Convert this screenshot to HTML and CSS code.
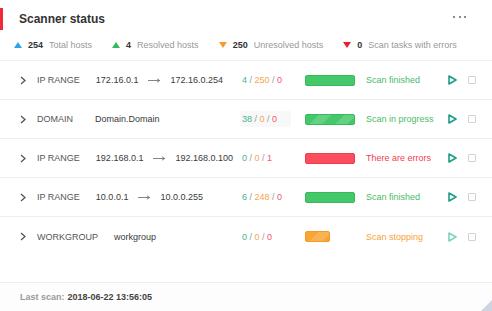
FILE: index.html
```html
<!DOCTYPE html>
<html>
<head>
<meta charset="utf-8">
<link rel="stylesheet" href="styles.css">
</head>
<body>
<div class="card">
  <div class="header">
    <span class="accent"></span>
    <h1 class="title">Scanner status</h1>
    <span class="dots"><i></i><i></i><i></i></span>
  </div>
  <div class="stats">
    <div class="stat"><span class="tri up blue"></span><b>254</b><span class="lbl">Total hosts</span></div>
    <div class="stat"><span class="tri up green"></span><b>4</b><span class="lbl">Resolved hosts</span></div>
    <div class="stat"><span class="tri down orange"></span><b>250</b><span class="lbl">Unresolved hosts</span></div>
    <div class="stat"><span class="tri down red"></span><b>0</b><span class="lbl">Scan tasks with errors</span></div>
  </div>
  <div class="rows">
    <div class="row">
      <span class="chev"><svg width="6" height="9" viewBox="0 0 6 9"><path d="M1 1 L5 4.5 L1 8" fill="none" stroke="#555" stroke-width="1.3"/></svg></span>
      <div class="main"><span class="type">IP RANGE</span><span class="addr">172.16.0.1</span><svg class="arrow" width="12" height="5" viewBox="0 0 12 5"><path d="M0 2.5 H11.5 M9 0.8 L11.7 2.5 L9 4.2" fill="none" stroke="#666" stroke-width="0.8"/></svg><span class="addr">172.16.0.254</span></div>
      <div class="counts"><span class="g">4</span> / <span class="o">250</span> / <span class="r">0</span></div>
      <div class="barcell"><span class="bar green-bar"></span></div>
      <div class="status s-green">Scan finished</div>
      <div class="play"><svg width="9" height="10" viewBox="0 0 9 10"><path d="M1 1 L8 5 L1 9 Z" fill="none" stroke="#1d9e86" stroke-width="1.6" stroke-linejoin="round"/></svg></div>
      <div class="check"></div>
    </div>
    <div class="row">
      <span class="chev"><svg width="6" height="9" viewBox="0 0 6 9"><path d="M1 1 L5 4.5 L1 8" fill="none" stroke="#555" stroke-width="1.3"/></svg></span>
      <div class="main"><span class="type">DOMAIN</span><span class="addr">Domain.Domain</span></div>
      <div class="counts"><span class="boxed"><span class="g">38</span> / <span class="o">0</span> / <span class="r">0</span></span></div>
      <div class="barcell"><span class="bar green-bar striped"></span></div>
      <div class="status s-green">Scan in progress</div>
      <div class="play"><svg width="9" height="10" viewBox="0 0 9 10"><path d="M1 1 L8 5 L1 9 Z" fill="none" stroke="#1d9e86" stroke-width="1.6" stroke-linejoin="round"/></svg></div>
      <div class="check"></div>
    </div>
    <div class="row">
      <span class="chev"><svg width="6" height="9" viewBox="0 0 6 9"><path d="M1 1 L5 4.5 L1 8" fill="none" stroke="#555" stroke-width="1.3"/></svg></span>
      <div class="main"><span class="type">IP RANGE</span><span class="addr">192.168.0.1</span><svg class="arrow" width="12" height="5" viewBox="0 0 12 5"><path d="M0 2.5 H11.5 M9 0.8 L11.7 2.5 L9 4.2" fill="none" stroke="#666" stroke-width="0.8"/></svg><span class="addr">192.168.0.100</span></div>
      <div class="counts"><span class="g">0</span> / <span class="o">0</span> / <span class="r">1</span></div>
      <div class="barcell"><span class="bar red-bar"></span></div>
      <div class="status s-red">There are errors</div>
      <div class="play"><svg width="9" height="10" viewBox="0 0 9 10"><path d="M1 1 L8 5 L1 9 Z" fill="none" stroke="#1d9e86" stroke-width="1.6" stroke-linejoin="round"/></svg></div>
      <div class="check"></div>
    </div>
    <div class="row">
      <span class="chev"><svg width="6" height="9" viewBox="0 0 6 9"><path d="M1 1 L5 4.5 L1 8" fill="none" stroke="#555" stroke-width="1.3"/></svg></span>
      <div class="main"><span class="type">IP RANGE</span><span class="addr">10.0.0.1</span><svg class="arrow" width="12" height="5" viewBox="0 0 12 5"><path d="M0 2.5 H11.5 M9 0.8 L11.7 2.5 L9 4.2" fill="none" stroke="#666" stroke-width="0.8"/></svg><span class="addr">10.0.0.255</span></div>
      <div class="counts"><span class="g">6</span> / <span class="o">248</span> / <span class="r">0</span></div>
      <div class="barcell"><span class="bar green-bar"></span></div>
      <div class="status s-green">Scan finished</div>
      <div class="play"><svg width="9" height="10" viewBox="0 0 9 10"><path d="M1 1 L8 5 L1 9 Z" fill="none" stroke="#1d9e86" stroke-width="1.6" stroke-linejoin="round"/></svg></div>
      <div class="check"></div>
    </div>
    <div class="row last">
      <span class="chev"><svg width="6" height="9" viewBox="0 0 6 9"><path d="M1 1 L5 4.5 L1 8" fill="none" stroke="#555" stroke-width="1.3"/></svg></span>
      <div class="main"><span class="type">WORKGROUP</span><span class="addr">workgroup</span></div>
      <div class="counts"><span class="g">0</span> / <span class="o">0</span> / <span class="r">0</span></div>
      <div class="barcell"><span class="bar orange-bar striped short"></span></div>
      <div class="status s-orange">Scan stopping</div>
      <div class="play"><svg width="9" height="10" viewBox="0 0 9 10"><path d="M1 1 L8 5 L1 9 Z" fill="none" stroke="#7fd3bf" stroke-width="1.6" stroke-linejoin="round"/></svg></div>
      <div class="check"></div>
    </div>
  </div>
  <div class="footer">
    <span class="flabel">Last scan:</span> <span class="fval">2018-06-22 13:56:05</span>
    <span class="grip"></span>
  </div>
</div>
</body>
</html>
```

FILE: styles.css
```css
* { box-sizing: border-box; }
html, body { margin: 0; padding: 0; }
body {
  background: #fff;
  font-family: "Liberation Sans", Arial, sans-serif;
  font-size: 9px;
  color: #444;
}
.card {
  width: 492px;
  height: 311px;
  display: flex;
  flex-direction: column;
  position: relative;
  background: #fff;
}
.header {
  display: flex;
  align-items: center;
  height: 22px;
  margin-top: 8px;
  padding-right: 26px;
}
.accent {
  width: 3px;
  height: 22px;
  background: #f2283c;
}
.title {
  margin: 0 0 0 16px;
  font-size: 12px;
  font-weight: bold;
  color: #333;
  flex: 1;
  line-height: 22px;
}
.dots {
  display: flex;
  gap: 3.5px;
  margin-bottom: 4px;
}
.dots i {
  width: 2px;
  height: 2px;
  background: #666;
  border-radius: 1px;
}
.stats {
  display: flex;
  gap: 20px;
  padding: 9px 0 9px 14px;
  line-height: 12px;
  border-bottom: 1px solid #f0f0f0;
}
.stat {
  display: flex;
  align-items: center;
}
.stat b { color: #333; margin-left: 6px; }
.stat .lbl { color: #999; margin-left: 6px; }
.tri {
  width: 0;
  height: 0;
  border-left: 4px solid transparent;
  border-right: 4px solid transparent;
}
.tri.up { border-bottom: 6px solid; }
.tri.down { border-top: 6px solid; }
.tri.blue { border-bottom-color: #2fa3e6; }
.tri.green { border-bottom-color: #36b85e; }
.tri.orange { border-top-color: #f59c2c; }
.tri.red { border-top-color: #ee1d33; }
.rows { display: flex; flex-direction: column; }
.row {
  height: 39px;
  display: grid;
  grid-template-columns: 17px 205px 63px 61px 82px 20px 8px;
  align-items: center;
  padding-left: 20px;
  border-bottom: 1px solid #efefef;
}
.row.last { border-bottom: none; }
.chev { display: flex; align-items: center; }
.main { display: flex; align-items: center; white-space: nowrap; }
.type { color: #555; min-width: 42px; margin-right: 16px; }
.addr { color: #3a3a3a; }
.arrow { margin: 0 10px; }
.counts { color: #999; white-space: nowrap; }
.boxed { background: #f8f8f8; padding: 3px 14px 3px 2px; margin-left: -2px; }
.g { color: #3fb68b; }
.o { color: #f7a54b; }
.r { color: #f2566c; }
.barcell { display: flex; align-items: center; }
.bar {
  width: 50px;
  height: 11px;
  border-radius: 2px;
  display: block;
}
.green-bar { background-color: #45c86a; border: 1px solid #3bb85e; }
.red-bar { background-color: #fb4d5d; border: 1px solid #ee3d4f; }
.orange-bar { background-color: #f8a534; border: 1px solid #f39a22; }
.short { width: 25px; }
.striped {
  background-image: repeating-linear-gradient(135deg, rgba(255,255,255,0) 0 9px, rgba(255,255,255,0.16) 9px 18px);
}
.status { white-space: nowrap; }
.s-green { color: #4cbb68; }
.s-red { color: #f23d50; }
.s-orange { color: #f5a23a; }
.play { display: flex; align-items: center; }
.check {
  width: 8px;
  height: 8px;
  border: 1.5px solid #d3d3d3;
  border-radius: 1px;
}
.footer {
  margin-top: auto;
  height: 29px;
  border-top: 1px solid #efefef;
  background: #fdfdfd;
  display: flex;
  align-items: center;
  padding-left: 20px;
  font-weight: bold;
  gap: 3px;
}
.flabel { color: #9a9a9a; }
.fval { color: #444; }
.grip {
  position: absolute;
  right: 0;
  bottom: 0;
  width: 0;
  height: 0;
  border-left: 11px solid transparent;
  border-bottom: 11px solid #cfd5e0;
}
```
